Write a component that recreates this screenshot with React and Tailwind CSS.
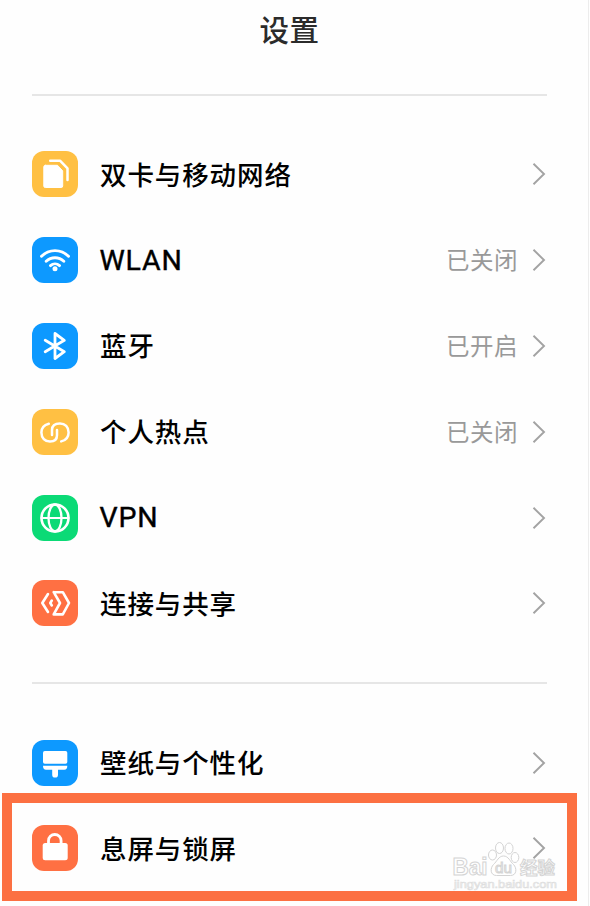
import React from "react";

const cjk = "font-['Noto_Sans_CJK_SC',sans-serif]";

function SimIcon() {
  return (
    <>
      <path d="M13.3 14.3h12.200l5.200 5.500v15.200a1.500 1.500 0 0 1-1.500 1.500H13.300a1.500 1.500 0 0 1-1.500-1.500V15.800a1.500 1.500 0 0 1 1.500-1.500Z" fill="#fff" />
      <path d="M18.200 9.700h9.800l7.500 7.700v11.600" strokeWidth="2.500" />
    </>
  );
}
function WifiIcon() {
  return (
    <>
      <path d="M9.500 19.300a19 19 0 0 1 27 0M14.200 24.300a12.700 12.700 0 0 1 17.600 0M18.500 28.600a6.700 6.700 0 0 1 9 0" strokeWidth="2.900" />
      <circle cx="23" cy="31.800" r="2.500" fill="#fff" stroke="none" />
    </>
  );
}
function BluetoothIcon() {
  return <path d="M13.200 17.300 32.300 28.700 23 35.500V10.500l9.300 6.800L13.200 28.700" strokeWidth="2.800" />;
}
function HotspotIcon() {
  return (
    <path d="M16.800 14.800C12.200 16 9.400 19.200 9.400 23.600c0 5.200 3.500 9 8.600 9 5 0 7-2.700 7-6.300V21M29.200 32.400c4.600-1.200 7.400-4.600 7.400-9 0-5.200-3.500-9-8.600-9-5.600 0-8 2.700-8 6.500V26" strokeWidth="2.500" />
  );
}
function GlobeIcon() {
  return (
    <>
      <circle cx="23" cy="23" r="13.500" strokeWidth="2.600" />
      <ellipse cx="23" cy="23" rx="6.500" ry="13.500" strokeWidth="2.300" />
      <path d="M9.500 23h27" strokeWidth="2.100" />
    </>
  );
}
function ShareIcon() {
  return (
    <path d="M16 14 10.300 23l5.700 9M19.800 20.500l-1.500 2.500 1.500 2.500M21.700 12.200h9.100L37 23l-6.200 11.400h-9.100L28 23l-6.300-10.800" strokeWidth="2.600" />
  );
}
function BrushIcon() {
  return (
    <>
      <rect x="11" y="11" width="24.300" height="12.800" rx="1.800" fill="#fff" stroke="none" />
      <path d="M11 25.700h24.300c0 2.900-1 4-3 4h-6.300v5a2.900 2.900 0 0 1-5.800 0v-5H14c-2 0-3-1.100-3-4Z" fill="#fff" stroke="none" />
    </>
  );
}
function LockIcon() {
  return (
    <>
      <rect x="10.700" y="18" width="25" height="17.300" rx="2.500" fill="#fff" stroke="none" />
      <path d="M16.500 19v-3.200a6.300 6.300 0 0 1 12.600 0V19" strokeWidth="2.800" />
    </>
  );
}

const network = [
  { label: "双卡与移动网络", Icon: SimIcon, bg: "bg-[#ffc043]" },
  { label: "WLAN", Icon: WifiIcon, bg: "bg-[#0d99ff]", value: "已关闭", latin: true },
  { label: "蓝牙", Icon: BluetoothIcon, bg: "bg-[#0d99ff]", value: "已开启" },
  { label: "个人热点", Icon: HotspotIcon, bg: "bg-[#ffc043]", value: "已关闭" },
  { label: "VPN", Icon: GlobeIcon, bg: "bg-[#0bda76]", latin: true },
  { label: "连接与共享", Icon: ShareIcon, bg: "bg-[#ff7043]" },
];
const display = [
  { label: "壁纸与个性化", Icon: BrushIcon, bg: "bg-[#0d99ff]" },
  { label: "息屏与锁屏", Icon: LockIcon, bg: "bg-[#ff7043]" },
];

function Row({ label, Icon, bg, value, latin }) {
  return (
    <div className="flex h-[85.8px] items-center">
      <div className={`size-[46px] shrink-0 rounded-[12px] ${bg}`}>
        <svg viewBox="0 0 46 46" className="size-full" fill="none" stroke="#fff" strokeLinecap="round" strokeLinejoin="round">
          <Icon />
        </svg>
      </div>
      <span
        className={
          latin
            ? "ml-[21.5px] flex-1 pt-[2px] font-['Roboto',sans-serif] text-[28.5px] leading-none tracking-[0.8px] text-black [-webkit-text-stroke:0.4px_#000]"
            : `ml-[22px] flex-1 pb-[1px] text-[26.5px] leading-none font-medium tracking-[0.9px] text-black ${cjk}`
        }
      >
        {label}
      </span>
      {value && <span className={`mr-[14px] pb-[1px] text-[23.5px] leading-none font-normal tracking-[0.5px] text-[#999] ${cjk}`}>{value}</span>}
      <svg viewBox="0 0 14 24" className="mr-px h-6 w-[14px]" fill="none" stroke="#a3a3a3" strokeWidth="1.900">
        <path d="M1.500 1.800 12 12 1.500 22.200" />
      </svg>
    </div>
  );
}

function Watermark() {
  return (
    <svg viewBox="0 0 112 56" className="absolute top-[838px] left-[450px] h-[56px] w-[112px]" fill="#fff" fillOpacity="0.6" stroke="#d4d4d4" strokeWidth="1">
      <ellipse cx="42.500" cy="17" rx="4" ry="5" />
      <ellipse cx="49.500" cy="10" rx="4" ry="5.500" />
      <ellipse cx="59" cy="10.500" rx="4" ry="5.500" />
      <ellipse cx="65" cy="19.500" rx="3.800" ry="5" />
      <path d="M53.500 18c5 0 6.500 5.500 10 8.500 3.500 3.500 3.500 11-3 11h-14c-6.500 0-6.500-7.500-3-11 3.500-3 5-8.500 10-8.500Z" />
      <g fontFamily="Liberation Sans, sans-serif">
        <text x="2.500" y="36.500" fontSize="23" fontWeight="700" textLength="35" lengthAdjust="spacingAndGlyphs">Bai</text>
        <text x="45" y="34.500" fontSize="15" textLength="17" lengthAdjust="spacingAndGlyphs">du</text>
        <text x="4" y="50" fontSize="11.500" textLength="103" lengthAdjust="spacingAndGlyphs" stroke="#dedede" strokeWidth="0.700">jingyan.baidu.com</text>
      </g>
      <text x="70" y="35.500" fontSize="17.500" fontWeight="700" fontFamily="Noto Sans CJK SC, sans-serif">经验</text>
    </svg>
  );
}

export default function App() {
  return (
    <div className="relative flex h-[906px] w-[590px] overflow-hidden bg-[#fefefe]">
      <main className="flex w-[589px] flex-col border-r border-[#ececec] pr-[41px] pl-8">
        <h1 className={`flex h-[93.500px] shrink-0 items-start justify-center pt-[13px] text-[29.5px] leading-[30px] font-medium tracking-[0.5px] text-[#2b2b2b] ${cjk}`}>设置</h1>
        <div className="h-[2px] shrink-0 bg-[#e6e6e6]" />
        <section className="pt-9">{network.map((r) => <Row key={r.label} {...r} />)}</section>
        <div className="mt-[35.5px] h-[2px] shrink-0 bg-[#e6e6e6]" />
        <section className="pt-9">{display.map((r) => <Row key={r.label} {...r} />)}</section>
      </main>
      <div className="absolute top-[793px] left-[2px] h-[108px] w-[575px] border-[10px] border-[#fc7042]" />
      <Watermark />
    </div>
  );
}
